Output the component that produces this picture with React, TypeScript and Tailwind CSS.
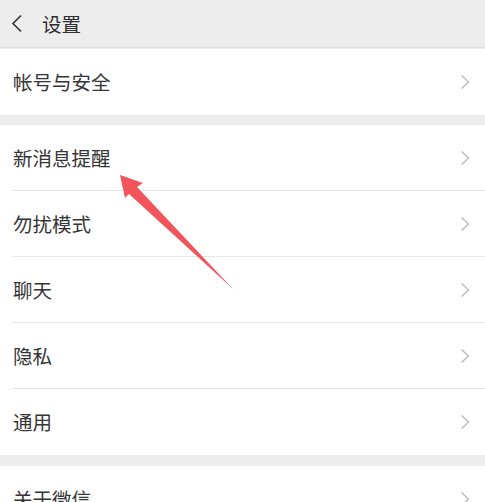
const CJK = "font-['Noto_Sans_CJK_SC','Noto_Sans',sans-serif]";

function Chevron() {
  return (
    <svg width="10" height="16" viewBox="0 0 10 16" className="shrink-0">
      <path d="M1.5 1.5 L8.5 8 L1.5 14.5" fill="none" stroke="#b8b8b8" strokeWidth="1.3" />
    </svg>
  );
}

function BackIcon() {
  return (
    <svg width="12" height="19" viewBox="0 0 12 19" className="shrink-0">
      <path d="M10 1.5 L2 9.5 L10 17.5" fill="none" stroke="#3a3a3a" strokeWidth="1.7" />
    </svg>
  );
}

function Row({ label, last }: { label: string; last?: boolean }) {
  return (
    <div className="bg-white pl-[13px]">
      <div
        className={`flex h-[66px] items-center justify-between pr-[15px] ${
          last ? "" : "border-b border-[#e6e6e6]"
        }`}
      >
        <span className="text-[19.5px] text-[#353535]">{label}</span>
        <Chevron />
      </div>
    </div>
  );
}

export default function App() {
  return (
    <div className={`relative h-[502px] w-[485px] overflow-hidden bg-[#ededed] ${CJK}`}>
      <div className="flex h-[48px] items-center gap-[19px] border-b border-[#e2e2e2] pl-[11px]">
        <BackIcon />
        <span className="text-[19.5px] text-[#2e2e2e]">设置</span>
      </div>
      <div className="mt-[1px]">
        <Row label="帐号与安全" last />
      </div>
      <div className="mt-[10px]">
        <Row label="新消息提醒" />
        <Row label="勿扰模式" />
        <Row label="聊天" />
        <Row label="隐私" />
        <Row label="通用" last />
      </div>
      <div className="mt-[11px]">
        <Row label="关于微信" last />
      </div>
      <svg
        className="pointer-events-none absolute left-0 top-0"
        width="485"
        height="502"
        viewBox="0 0 485 502"
      >
        <polygon points="120,175 125,198 129,194 233,289 137,187 143,183" fill="#f2545b" />
      </svg>
    </div>
  );
}
